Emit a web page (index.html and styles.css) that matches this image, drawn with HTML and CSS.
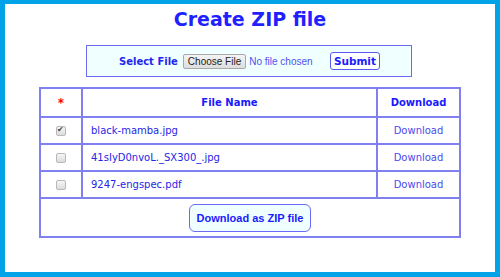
FILE: index.html
```html
<!DOCTYPE html>
<html lang="en">
<head>
    <meta charset="UTF-8">
    <title>Create ZIP file</title>
    <link rel="stylesheet" href="styles.css">
</head>
<body>
    <div class="frame">
        <h1>Create ZIP file</h1>
        <form class="upload-box">
            <label for="fileInput">Select File</label>
            <input type="file" id="fileInput">
            <button type="submit" class="submit-btn">Submit</button>
        </form>

        <table class="file-table">
            <tr>
                <th class="col-check"><span class="star">*</span></th>
                <th class="col-name">File Name</th>
                <th class="col-dl">Download</th>
            </tr>
            <tr>
                <td class="col-check"><input type="checkbox" checked></td>
                <td class="file-name">black-mamba.jpg</td>
                <td class="dl-link">Download</td>
            </tr>
            <tr>
                <td class="col-check"><input type="checkbox"></td>
                <td class="file-name">41sIyD0nvoL._SX300_.jpg</td>
                <td class="dl-link">Download</td>
            </tr>
            <tr>
                <td class="col-check"><input type="checkbox"></td>
                <td class="file-name">9247-engspec.pdf</td>
                <td class="dl-link">Download</td>
            </tr>
            <tr>
                <td colspan="3" class="footer-cell">
                    <button class="zip-btn">Download as ZIP file</button>
                </td>
            </tr>
        </table>
    </div>
</body>
</html>
```

FILE: styles.css
```css
/* Página de descarga ZIP */
body {
    margin: 0;
    font-family: "Comic Sans MS", "DejaVu Sans", sans-serif;
}
.frame {
    width: 500px;
    height: 277px;
    box-sizing: border-box;
    border: 5px solid #00a2e8;
    border-top-width: 4px;
    background-color: #fff;
    padding-top: 2px;
}
h1 {
    margin: 0;
    text-align: center;
    font-size: 19px;
    line-height: 27px;
    color: #1f1fff;
}
.upload-box {
    width: 324px;
    height: 30px;
    margin: 12px 0 0 81px;
    border: 1px solid #6b6bf5;
    background-color: #f0ffff;
    display: flex;
    align-items: center;
}
.upload-box label {
    margin-left: 32px;
    white-space: nowrap;
    font-weight: bold;
    font-size: 10px;
    color: #2525f0;
}
.upload-box input[type="file"] {
    margin-left: 5px;
    width: 130px;
    font-family: "Liberation Sans", Arial, sans-serif;
    font-size: 10px;
    color: #5050ee;
}
.upload-box input[type="file"]::file-selector-button {
    font-family: "Liberation Sans", Arial, sans-serif;
    font-size: 10px;
    color: #222;
    padding: 1px 4px;
    margin-right: 3px;
    border: 1px solid #a9a9a9;
    border-radius: 2px;
    background: linear-gradient(#f4f4f4, #dedede);
}
.submit-btn {
    margin-left: auto;
    margin-right: 31px;
    background-color: #fff;
    border: 1px solid #5a5af0;
    border-radius: 3px;
    padding: 2px 3px;
    font-family: "Comic Sans MS", "DejaVu Sans", sans-serif;
    font-weight: bold;
    font-size: 10.5px;
    color: #1a1aff;
}
.file-table {
    margin: 10px 0 0 34px;
    width: 422px;
    border-collapse: collapse;
    border: 2px solid #7070f0;
}
.file-table th,
.file-table td {
    border: 2px solid #8080f0;
    text-align: center;
    padding: 0;
}
.file-table th {
    height: 27px;
    font-size: 10px;
    color: #1a1aff;
}
.file-table td {
    height: 25px;
    font-size: 10px;
}
.col-check {
    width: 40px;
}
.col-dl {
    width: 81px;
}
.star {
    color: #f00;
    font-size: 12px;
}
.file-table td.file-name {
    text-align: left;
    padding-left: 8px;
    color: #2626e6;
}
.dl-link {
    color: #4a4aee;
}
.col-check input {
    appearance: none;
    margin: 0;
    width: 10px;
    height: 10px;
    border: 1px solid #b8b8b8;
    border-radius: 2px;
    background: linear-gradient(#f6f6f6, #dcdcdc);
    vertical-align: middle;
    position: relative;
}
.col-check input:checked::after {
    content: "\2714";
    position: absolute;
    left: 0;
    top: -2px;
    font-size: 8px;
    color: #444;
}
.footer-cell {
    height: 37px !important;
}
.zip-btn {
    background-color: #f0ffff;
    border: 1px solid #6b6bf5;
    border-radius: 6px;
    padding: 7px 7px;
    font-family: "Liberation Sans", Arial, sans-serif;
    font-weight: bold;
    font-size: 11px;
    color: #1a1aff;
}
```
